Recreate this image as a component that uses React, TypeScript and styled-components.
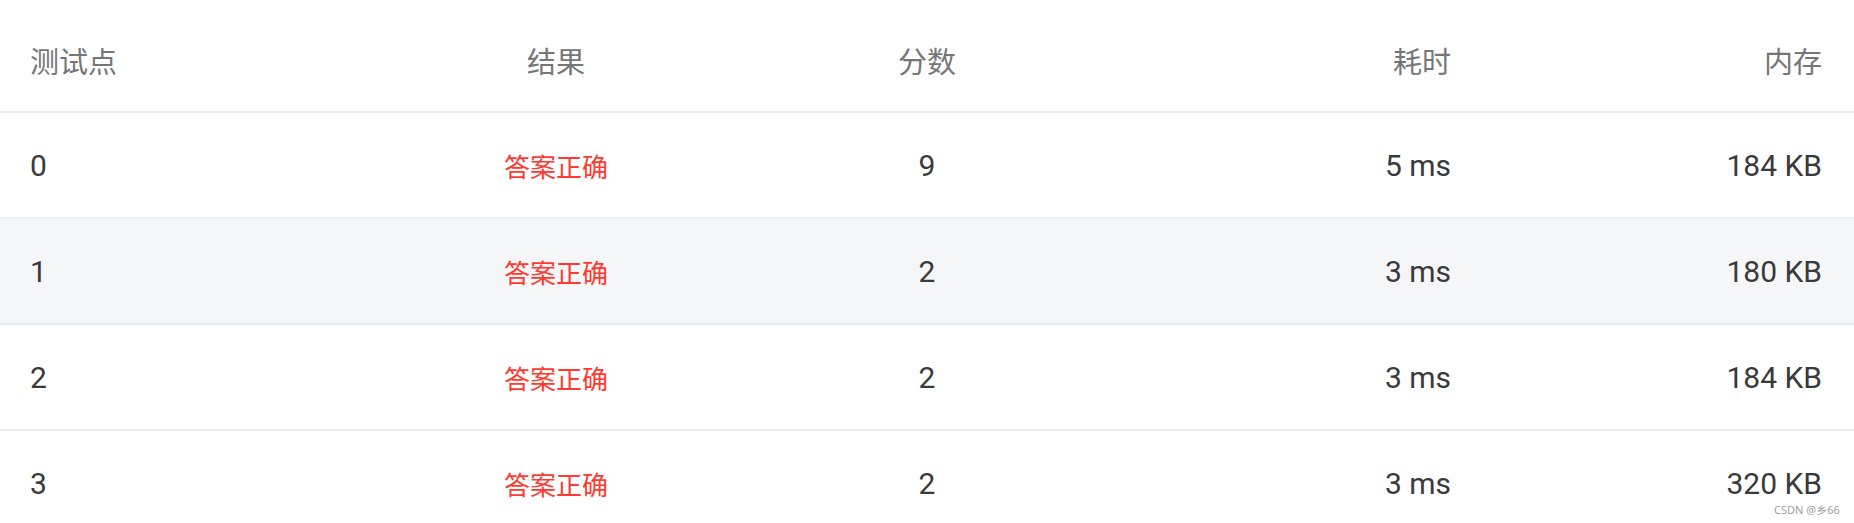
import React from "react";
import styled, { createGlobalStyle } from "styled-components";

type Align = "left" | "center" | "right";

const columns: { key: string; title: string; width: string; align: Align; padRight: number }[] = [
  { key: "id", title: "测试点", width: "300px", align: "left", padRight: 30 },
  { key: "result", title: "结果", width: "512px", align: "center", padRight: 30 },
  { key: "score", title: "分数", width: "230px", align: "center", padRight: 30 },
  { key: "time", title: "耗时", width: "439px", align: "right", padRight: 30 },
  { key: "memory", title: "内存", width: "1fr", align: "right", padRight: 32 },
];

const resultsData = [
  { id: 0, result: "答案正确", score: 9, time: "5 ms", memory: "184 KB", hovered: false },
  { id: 1, result: "答案正确", score: 2, time: "3 ms", memory: "180 KB", hovered: true },
  { id: 2, result: "答案正确", score: 2, time: "3 ms", memory: "184 KB", hovered: false },
  { id: 3, result: "答案正确", score: 2, time: "3 ms", memory: "320 KB", hovered: false },
];

const justifyMap: Record<Align, string> = {
  left: "flex-start",
  center: "center",
  right: "flex-end",
};

const App = () => {
  return (
    <>
      <GlobalStyle />
      <TableWrapper>
        <HeaderRow>
          {columns.map((col) => (
            <Cell key={col.key} $align={col.align} $padRight={col.padRight}>
              <HeaderText>{col.title}</HeaderText>
            </Cell>
          ))}
        </HeaderRow>
        {resultsData.map((item) => (
          <BodyRow key={item.id} $hovered={item.hovered}>
            <Cell $align={columns[0].align} $padRight={columns[0].padRight}>
              <ValueText>{item.id}</ValueText>
            </Cell>
            <Cell $align={columns[1].align} $padRight={columns[1].padRight}>
              <ResultText>{item.result}</ResultText>
            </Cell>
            <Cell $align={columns[2].align} $padRight={columns[2].padRight}>
              <ValueText>{item.score}</ValueText>
            </Cell>
            <Cell $align={columns[3].align} $padRight={columns[3].padRight}>
              <ValueText>{item.time}</ValueText>
            </Cell>
            <Cell $align={columns[4].align} $padRight={columns[4].padRight}>
              <ValueText>{item.memory}</ValueText>
            </Cell>
          </BodyRow>
        ))}
        <Watermark>CSDN @乡66</Watermark>
      </TableWrapper>
    </>
  );
};

export default App;

const GlobalStyle = createGlobalStyle`
  html, body {
    margin: 0;
    padding: 0;
    background: #ffffff;
  }
  body {
    width: 1854px;
    height: 523px;
    overflow: hidden;
    font-family: Roboto, "Noto Sans CJK SC", sans-serif;
  }
`;

const TableWrapper = styled.div`
  position: relative;
  width: 1854px;
  height: 523px;
  overflow: hidden;
  background: #ffffff;
`;

const gridCols = columns.map((c) => c.width).join(" ");

const HeaderRow = styled.div`
  display: grid;
  grid-template-columns: ${gridCols};
  height: 113px;
  padding-top: 8px;
  box-sizing: border-box;
  border-bottom: 2px solid #ebedf0;
`;

const BodyRow = styled.div<{ $hovered?: boolean }>`
  display: grid;
  grid-template-columns: ${gridCols};
  height: 106px;
  box-sizing: border-box;
  border-bottom: 2px solid #ebedf0;
  background: ${(props) => (props.$hovered ? "#f5f6f8" : "#ffffff")};
`;

const Cell = styled.div<{ $align: Align; $padRight: number }>`
  display: flex;
  align-items: center;
  justify-content: ${(props) => justifyMap[props.$align]};
  padding-left: 30px;
  padding-right: ${(props) => props.$padRight}px;
  min-width: 0;
`;

const HeaderText = styled.span`
  font-family: "Noto Sans CJK SC", sans-serif;
  font-size: 29px;
  font-weight: 400;
  color: #767676;
`;

const ValueText = styled.span`
  font-family: Roboto, "Noto Sans CJK SC", sans-serif;
  font-size: 30px;
  color: #3a3a3a;
`;

const ResultText = styled.span`
  font-family: "Noto Sans CJK SC", sans-serif;
  font-size: 26px;
  color: #ff3a30;
`;

const Watermark = styled.div`
  position: absolute;
  left: 1774px;
  top: 501px;
  font-family: "Noto Sans", "Noto Sans CJK SC", sans-serif;
  font-size: 11px;
  color: #a0a0a0;
  white-space: nowrap;
`;
